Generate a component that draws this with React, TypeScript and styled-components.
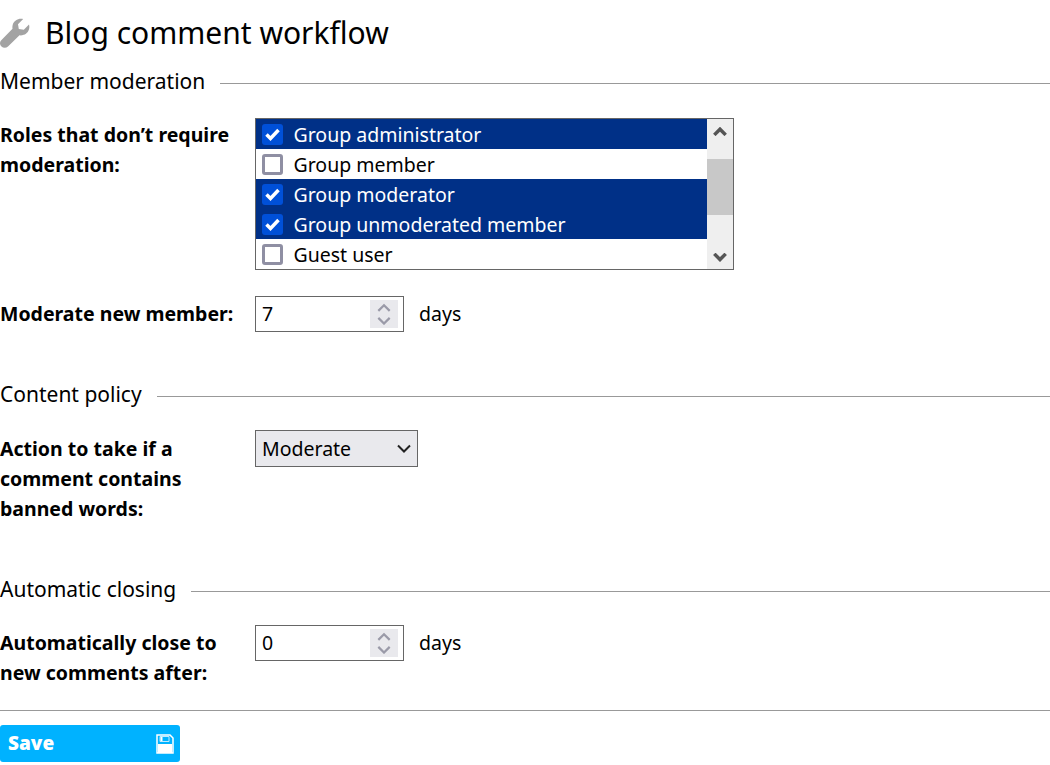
import styled, { createGlobalStyle } from "styled-components";

const GlobalStyle = createGlobalStyle`
  html, body {
    margin: 0;
    padding: 0;
    background: #fff;
    color: #000;
    font-family: "Noto Sans", sans-serif;
    font-size: 19.5px;
    line-height: 30px;
    overflow: hidden;
  }
`;

const Page = styled.div`
  width: 1050px;
  height: 765px;
  overflow: hidden;
`;

const Title = styled.h1`
  margin: 0;
  height: 66px;
  display: flex;
  align-items: center;
  gap: 15px;
  font-size: 30px;
  font-weight: 400;
  line-height: 40px;
`;

const Section = styled.section<{ $height: number }>`
  height: ${({ $height }) => $height}px;
`;

const Legend = styled.div`
  display: flex;
  gap: 15px;
  height: 30px;
  font-size: 21px;
  white-space: nowrap;

  &::after {
    content: "";
    flex: 1;
    height: 1px;
    margin-top: 17px;
    background: #999;
  }
`;

const Row = styled.div<{ $top: number }>`
  display: flex;
  margin-top: ${({ $top }) => $top}px;
`;

const Label = styled.label<{ $nudge?: number }>`
  width: 255px;
  flex: none;
  font-weight: 700;
  padding-top: ${({ $nudge }) => $nudge ?? 3}px;
`;

const LabelText = styled.span<{ $width?: number }>`
  display: block;
  max-width: ${({ $width }) => $width ?? 240}px;
`;

const ListBox = styled.div`
  width: 479px;
  height: 152px;
  box-sizing: border-box;
  border: 1px solid #666;
  display: flex;
`;

const Options = styled.div`
  flex: 1;
`;

const Option = styled.div<{ $selected: boolean }>`
  height: 30px;
  display: flex;
  align-items: center;
  gap: 10.500px;
  padding-left: 6px;
  background: ${({ $selected }) => ($selected ? "#003087" : "#fff")};
  color: ${({ $selected }) => ($selected ? "#fff" : "#000")};
`;

const OptionText = styled.span`
  padding-top: 1px;
`;

const Check = styled.span<{ $checked: boolean }>`
  width: 21px;
  height: 21px;
  box-sizing: border-box;
  border-radius: 3px;
  display: flex;
  align-items: center;
  justify-content: center;
  background: ${({ $checked }) => ($checked ? "#0050d8" : "#fff")};
  border: ${({ $checked }) => ($checked ? "none" : "3px solid #8f8fa3")};
`;

const ScrollBar = styled.div`
  width: 26px;
  flex: none;
  background: #efefef;
  display: flex;
  flex-direction: column;
`;

const ScrollArrow = styled.div`
  height: 40px;
  box-sizing: border-box;
  padding-top: 8px;
  display: flex;
  justify-content: center;
  color: #555;
`;

const ScrollThumb = styled.div`
  height: 56px;
  background: #c8c8c8;
`;

const ScrollRest = styled.div`
  flex: 1;
  display: flex;
  align-items: flex-end;
  justify-content: center;
  padding-bottom: 7px;
  color: #555;
`;

const FieldRow = styled.div`
  display: flex;
  align-items: center;
  gap: 15px;
  height: 36px;
`;

const Spin = styled.div`
  width: 149px;
  height: 36px;
  box-sizing: border-box;
  border: 1px solid #666;
  display: flex;
  align-items: center;
  justify-content: space-between;
  padding: 0 5px 0 6px;
`;

const SpinButtons = styled.div`
  width: 28px;
  height: 28px;
  background: #e9e9ed;
  display: flex;
  flex-direction: column;
  align-items: center;
  justify-content: center;
  gap: 5px;
  color: #9a9aa8;
`;

const SelectBox = styled.div`
  width: 163px;
  height: 37px;
  box-sizing: border-box;
  border: 1px solid #666;
  background: #e9e9ed;
  display: flex;
  align-items: center;
  justify-content: space-between;
  padding: 0 6px;
`;

const Divider = styled.hr`
  margin: 0;
  border: none;
  height: 1px;
  background: #999;
`;

const SaveButton = styled.button`
  margin-top: 14px;
  width: 180px;
  height: 37px;
  border: none;
  border-radius: 3px;
  background: #00b2ff;
  color: #fff;
  display: flex;
  align-items: center;
  justify-content: space-between;
  padding: 0 6px 0 8px;
  font-family: "Open Sans", sans-serif;
  font-size: 19px;
  font-weight: 800;
`;

const SaveText = styled.span`
  padding-bottom: 2px;
`;

const Wrench = () => (
  <svg width="30" height="30" viewBox="0 0 30 30" fill="#a3a3a3">
    <path d="M29 6.500 23.800 11.800 18.800 11 18 6.200 23.200 1C18.500-.2 14 2.500 12.800 6.500 12.300 8.200 12.300 9.500 12.500 10.800L1.500 22C-.5 24-.5 26.800 1.500 28.500 3.300 30.300 6 30.300 8 28.500L19.500 17.300C20.800 17.500 22.300 17.300 23.700 16.800 27.800 15.500 30.300 11 29 6.500Z" />
  </svg>
);

const Tick = () => (
  <svg width="15" height="13" viewBox="0 0 15 13" fill="none" stroke="#fff" strokeWidth="3.500">
    <path d="M1.500 6.500 5.500 10.500 13.500 2" />
  </svg>
);

const Chevron = ({ up, size = 16, width = 3 }: { up?: boolean; size?: number; width?: number }) => (
  <svg width={size} height={size * 0.625} viewBox="0 0 16 10" fill="none" stroke="currentColor" strokeWidth={width}>
    <path d={up ? "M1.500 9 8 2.500 14.500 9" : "M1.500 1 8 7.500 14.500 1"} />
  </svg>
);

const Disk = () => (
  <svg width="18" height="20" viewBox="0 0 18 20" fill="none">
    <path d="M1 1h13l3 3v15H1z" stroke="#fff" strokeWidth="1.500" />
    <path fill="#fff" d="M2 10h14v9H2z" />
    <path stroke="#bfeaff" d="M4 2.500h9v5H4z" />
    <path fill="#fff" d="M4.500 3h2v4h-2z" />
  </svg>
);

const roles = [
  { name: "Group administrator", checked: true },
  { name: "Group member", checked: false },
  { name: "Group moderator", checked: true },
  { name: "Group unmoderated member", checked: true },
  { name: "Guest user", checked: false },
];

const NumberField = ({ value }: { value: number }) => (
  <FieldRow>
    <Spin>
      {value}
      <SpinButtons>
        <Chevron up size={14} width={2.500} />
        <Chevron size={14} width={2.500} />
      </SpinButtons>
    </Spin>
    days
  </FieldRow>
);

export default function App() {
  return (
    <Page>
      <GlobalStyle />
      <Title>
        <Wrench />
        Blog comment workflow
      </Title>

      <Section $height={313}>
        <Legend>Member moderation</Legend>
        <Row $top={22}>
          <Label $nudge={2}>
            <LabelText>Roles that don’t require moderation:</LabelText>
          </Label>
          <ListBox>
            <Options>
              {roles.map((role) => (
                <Option key={role.name} $selected={role.checked}>
                  <Check $checked={role.checked}>{role.checked && <Tick />}</Check>
                  <OptionText>{role.name}</OptionText>
                </Option>
              ))}
            </Options>
            <ScrollBar>
              <ScrollArrow>
                <Chevron up size={14} width={4} />
              </ScrollArrow>
              <ScrollThumb />
              <ScrollRest>
                <Chevron size={14} width={4} />
              </ScrollRest>
            </ScrollBar>
          </ListBox>
        </Row>
        <Row $top={26}>
          <Label>
            <LabelText>Moderate new member:</LabelText>
          </Label>
          <NumberField value={7} />
        </Row>
      </Section>

      <Section $height={195}>
        <Legend>Content policy</Legend>
        <Row $top={21}>
          <Label $nudge={4}>
            <LabelText $width={200}>Action to take if a comment contains banned words:</LabelText>
          </Label>
          <SelectBox>
            Moderate
            <svg width="14" height="9" viewBox="0 0 14 9" fill="none" stroke="#222" strokeWidth="2">
              <path d="M1 1.500 7 7.500 13 1.500" />
            </svg>
          </SelectBox>
        </Row>
      </Section>

      <Section $height={136}>
        <Legend>Automatic closing</Legend>
        <Row $top={21}>
          <Label>
            <LabelText $width={230}>Automatically close to new comments after:</LabelText>
          </Label>
          <NumberField value={0} />
        </Row>
      </Section>

      <Divider />
      <SaveButton>
        <SaveText>Save</SaveText>
        <Disk />
      </SaveButton>
    </Page>
  );
}
